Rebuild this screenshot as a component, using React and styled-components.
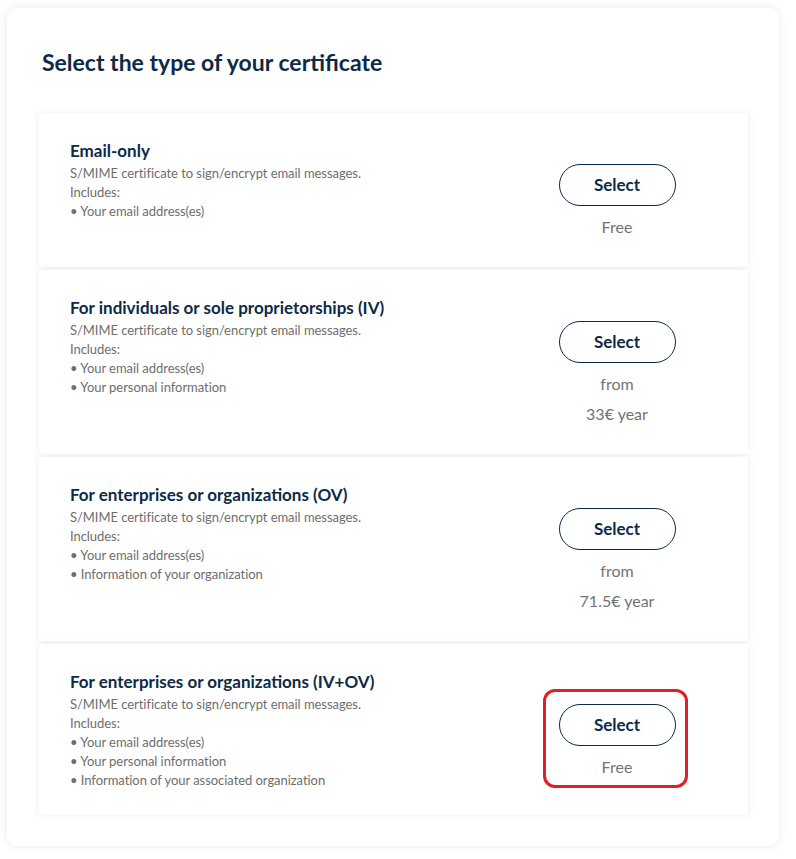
import React from "react";
import styled, { createGlobalStyle } from "styled-components";

const Global = createGlobalStyle`
  html, body { margin: 0; padding: 0; background: #ffffff; }
  body { font-family: Lato, "Open Sans", Arial, sans-serif; -webkit-font-smoothing: antialiased; }
  * { box-sizing: border-box; }
`;

const Page = styled.div`
  padding: 8px 17px 13px 7px;
`;

const Card = styled.section`
  background: #fff;
  border-radius: 10px;
  box-shadow: 0 0 10px rgba(0, 0, 0, 0.09);
  padding: 38px 31px 31px 32px;
`;

const Title = styled.h1`
  margin: 0 0 35px 3px;
  font-size: 23px;
  line-height: 32px;
  font-weight: 700;
  color: #0d2a47;
`;

const List = styled.div`
  display: flex;
  flex-direction: column;
  gap: 3px;
`;

const Row = styled.div`
  display: flex;
  align-items: center;
  background: #fff;
  box-shadow: 0 0 8px rgba(0, 0, 0, 0.07);
  padding: 25px 31px;
`;

const Info = styled.div`
  flex: 1;
  align-self: flex-start;
`;

const Name = styled.h2`
  margin: 0;
  font-size: 17px;
  line-height: 26px;
  font-weight: 700;
  color: #0d2a47;
`;

const Desc = styled.div`
  font-size: 13px;
  line-height: 19px;
  letter-spacing: -0.05px;
  color: #6e6e6e;
`;

const Action = styled.div`
  position: relative;
  width: 200px;
  padding-top: 26px;
  display: flex;
  flex-direction: column;
  align-items: center;
`;

const SelectButton = styled.button`
  width: 117px;
  height: 42px;
  padding: 0 0 1px;
  border: 1px solid #0d2a47;
  border-radius: 21px;
  background: #fff;
  color: #0d2a47;
  font-family: inherit;
  font-size: 17px;
  font-weight: 700;
  cursor: pointer;
`;

const Price = styled.div`
  margin-top: 6px;
  text-align: center;
  font-size: 16px;
  line-height: 30px;
  color: #737373;
`;

const Highlight = styled.div`
  position: absolute;
  left: 26px;
  top: 11px;
  width: 145px;
  height: 99px;
  border: 3px solid #e31e25;
  border-radius: 12px;
  pointer-events: none;
`;

const items = [
  {
    name: "Email-only",
    lines: ["Your email address(es)"],
    price: ["Free"],
  },
  {
    name: "For individuals or sole proprietorships (IV)",
    lines: ["Your email address(es)", "Your personal information"],
    price: ["from", "33€ year"],
  },
  {
    name: "For enterprises or organizations (OV)",
    lines: ["Your email address(es)", "Information of your organization"],
    price: ["from", "71.5€ year"],
  },
  {
    name: "For enterprises or organizations (IV+OV)",
    lines: [
      "Your email address(es)",
      "Your personal information",
      "Information of your associated organization",
    ],
    price: ["Free"],
    highlight: true,
  },
];

export default function App() {
  return (
    <Page>
      <Global />
      <Card>
        <Title>Select the type of your certificate</Title>
        <List>
          {items.map((it) => (
            <Row key={it.name}>
              <Info>
                <Name>{it.name}</Name>
                <Desc>S/MIME certificate to sign/encrypt email messages.</Desc>
                <Desc>Includes:</Desc>
                {it.lines.map((l) => (
                  <Desc key={l}>• {l}</Desc>
                ))}
              </Info>
              <Action>
                <SelectButton>Select</SelectButton>
                <Price>
                  {it.price.map((p) => (
                    <div key={p}>{p}</div>
                  ))}
                </Price>
                {it.highlight && <Highlight />}
              </Action>
            </Row>
          ))}
        </List>
      </Card>
    </Page>
  );
}
